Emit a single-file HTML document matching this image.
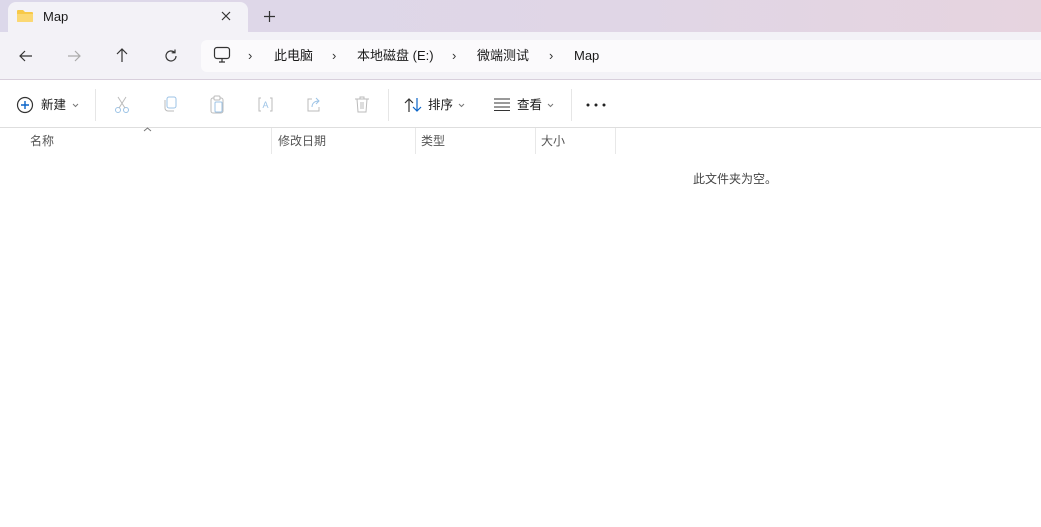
<!DOCTYPE html>
<html><head><meta charset="utf-8"><style>
*{margin:0;padding:0;box-sizing:border-box}
body{width:1041px;height:527px;overflow:hidden;background:#fff;font-family:"Liberation Sans","Noto Sans CJK SC",sans-serif;position:relative;color:#1a1a1a}
.abs{position:absolute}
#top{left:0;top:0;width:1041px;height:32px;background:linear-gradient(90deg,#dcd8ea,#e0d6e6 60%,#e6d4df)}
#tab{left:8px;top:2px;width:240px;height:31px;background:#f3f2f7;border-radius:8px 8px 0 0}
#nav{left:0;top:32px;width:1041px;height:48px;background:#f3f2f7;border-bottom:1px solid #d8cfdc}
#addr{left:201px;top:40px;width:845px;height:32px;background:#fbfafc;border-radius:6px}
.t{font-size:13px;white-space:nowrap;line-height:16px}
.c{font-size:12.5px;line-height:16px;white-space:nowrap}
.sep{width:1px;height:32px;background:#e6e6e6;top:89px}
.hd{font-size:12px;color:#555;top:134px;line-height:14px}
.vl{width:1px;height:26px;background:#e8e8e8;top:128px}
</style></head><body>
<div id="top" class="abs"></div>
<div id="tab" class="abs"></div>
<svg class="abs" style="left:16px;top:9px" width="18" height="14" viewBox="0 0 18 14"><path d="M1 2a1 1 0 0 1 1-1h5l2 2h7a1 1 0 0 1 1 1v8a1 1 0 0 1-1 1H2a1 1 0 0 1-1-1z" fill="#f7c948"/><path d="M1 5h16v7a1 1 0 0 1-1 1H2a1 1 0 0 1-1-1z" fill="#fbd873"/></svg>
<div class="abs t" style="left:43px;top:9px">Map</div>
<svg class="abs" style="left:221px;top:11px" width="10" height="10"><path d="M1 1l8 8M9 1l-8 8" stroke="#333" stroke-width="1.2"/></svg>
<svg class="abs" style="left:264px;top:11px" width="11" height="11"><path d="M5.5 0v11M0 5.5h11" stroke="#333" stroke-width="1.2"/></svg>
<div id="nav" class="abs"></div>
<svg class="abs" style="left:18px;top:48px" width="16" height="16"><path d="M14 8H2M7 3L2 8l5 5" stroke="#333" stroke-width="1.2" fill="none"/></svg>
<svg class="abs" style="left:66px;top:48px" width="16" height="16"><path d="M2 8h12M9 3l5 5-5 5" stroke="#aaa" stroke-width="1.2" fill="none"/></svg>
<svg class="abs" style="left:114px;top:47px" width="16" height="16"><path d="M8 15V2M3 7l5-5 5 5" stroke="#333" stroke-width="1.2" fill="none"/></svg>
<svg class="abs" style="left:163px;top:48px" width="16" height="16"><path d="M13 8a5 5 0 1 1-1.5-3.6M12 1.5v3.3H8.7" stroke="#333" stroke-width="1.2" fill="none"/></svg>
<div id="addr" class="abs"></div>
<svg class="abs" style="left:213px;top:46px" width="18" height="18"><rect x="1.5" y="1.5" width="15" height="11" rx="2.5" stroke="#333" stroke-width="1.2" fill="none"/><path d="M6 16h6M9 13v3" stroke="#333" stroke-width="1.2"/></svg>
<div class="abs t" style="left:248px;top:48px;color:#333">›</div>
<div class="abs t" style="left:274px;top:48px">此电脑</div>
<div class="abs t" style="left:332px;top:48px;color:#333">›</div>
<div class="abs t" style="left:357px;top:48px">本地磁盘 (E:)</div>
<div class="abs t" style="left:452px;top:48px;color:#333">›</div>
<div class="abs t" style="left:477px;top:48px">微端测试</div>
<div class="abs t" style="left:549px;top:48px;color:#333">›</div>
<div class="abs t" style="left:574px;top:48px">Map</div>
<svg class="abs" style="left:16px;top:96px" width="18" height="18"><circle cx="9" cy="9" r="7.5" stroke="#333" stroke-width="1.2" fill="none"/><path d="M9 5v8M5 9h8" stroke="#0a64c8" stroke-width="1.4"/></svg>
<div class="abs c" style="left:41px;top:97px">新建</div>
<svg class="abs" style="left:72px;top:103px" width="7" height="5"><path d="M1 1l2.5 2.5L6 1" stroke="#777" fill="none"/></svg>
<div class="abs sep" style="left:95px"></div>
<svg class="abs" style="left:114px;top:96px" width="16" height="18" viewBox="0 0 16 18"><circle cx="4" cy="14" r="2.5" stroke="#9cc3e6" fill="none"/><circle cx="12" cy="14" r="2.5" stroke="#9cc3e6" fill="none"/><path d="M5 12L12 1M11 12L4 1" stroke="#bbb"/></svg>
<svg class="abs" style="left:162px;top:96px" width="16" height="17"><rect x="5" y="1" width="9" height="11" rx="2" stroke="#9cc3e6" fill="none"/><path d="M3 4v8a3 3 0 0 0 3 3h6" stroke="#bbb" fill="none"/></svg>
<svg class="abs" style="left:209px;top:95px" width="16" height="19"><rect x="2" y="3" width="12" height="15" rx="2" stroke="#bbb" fill="none"/><rect x="5" y="1" width="6" height="4" rx="1" stroke="#bbb" fill="#fff"/><rect x="6" y="7" width="7" height="10" rx="1" stroke="#9cc3e6" fill="none"/></svg>
<svg class="abs" style="left:257px;top:96px" width="17" height="17"><path d="M4 2H2v13h2M13 2h2v13h-2" stroke="#bbb" fill="none"/><text x="8.5" y="12" font-size="9" text-anchor="middle" fill="#9cc3e6" font-family="Liberation Sans">A</text></svg>
<svg class="abs" style="left:305px;top:96px" width="17" height="17"><path d="M7 3H3v12h11v-4" stroke="#bbb" fill="none"/><path d="M7 11c0-4 3-6 7-6M11 2l3 3-3 3" stroke="#9cc3e6" fill="none"/></svg>
<svg class="abs" style="left:354px;top:96px" width="16" height="17"><path d="M1 3h14M6 3V1h4v2M3 3l1 13h8l1-13M7 6v7M9 6v7" stroke="#bbb" fill="none"/></svg>
<div class="abs sep" style="left:388px"></div>
<svg class="abs" style="left:404px;top:97px" width="18" height="16"><path d="M5 15V2M1 6l4-4 4 4" stroke="#333" stroke-width="1.2" fill="none"/><path d="M13 1v13M9 10l4 4 4-4" stroke="#0a64c8" stroke-width="1.2" fill="none"/></svg>
<div class="abs c" style="left:428px;top:97px">排序</div>
<svg class="abs" style="left:458px;top:103px" width="7" height="5"><path d="M1 1l2.5 2.5L6 1" stroke="#777" fill="none"/></svg>
<svg class="abs" style="left:493px;top:98px" width="18" height="13"><path d="M1 1h16M1 5h16M1 9h16M1 12.5h16" stroke="#333" stroke-width="1.1"/></svg>
<div class="abs c" style="left:517px;top:97px">查看</div>
<svg class="abs" style="left:547px;top:103px" width="7" height="5"><path d="M1 1l2.5 2.5L6 1" stroke="#777" fill="none"/></svg>
<div class="abs sep" style="left:571px"></div>
<svg class="abs" style="left:586px;top:103px" width="20" height="4"><circle cx="2" cy="2" r="1.5" fill="#222"/><circle cx="10" cy="2" r="1.5" fill="#222"/><circle cx="18" cy="2" r="1.5" fill="#222"/></svg>
<div class="abs" style="left:0;top:127px;width:1041px;height:1px;background:#dedede"></div>
<svg class="abs" style="left:143px;top:127px" width="9" height="5"><path d="M1 4l3.5-3L8 4" stroke="#777" fill="none"/></svg>
<div class="abs hd" style="left:30px">名称</div>
<div class="abs vl" style="left:271px"></div>
<div class="abs hd" style="left:278px">修改日期</div>
<div class="abs vl" style="left:415px"></div>
<div class="abs hd" style="left:421px">类型</div>
<div class="abs vl" style="left:535px"></div>
<div class="abs hd" style="left:541px">大小</div>
<div class="abs vl" style="left:615px"></div>
<div class="abs" style="left:693px;top:172px;font-size:12px;line-height:14px;color:#444">此文件夹为空。</div>
</body></html>
